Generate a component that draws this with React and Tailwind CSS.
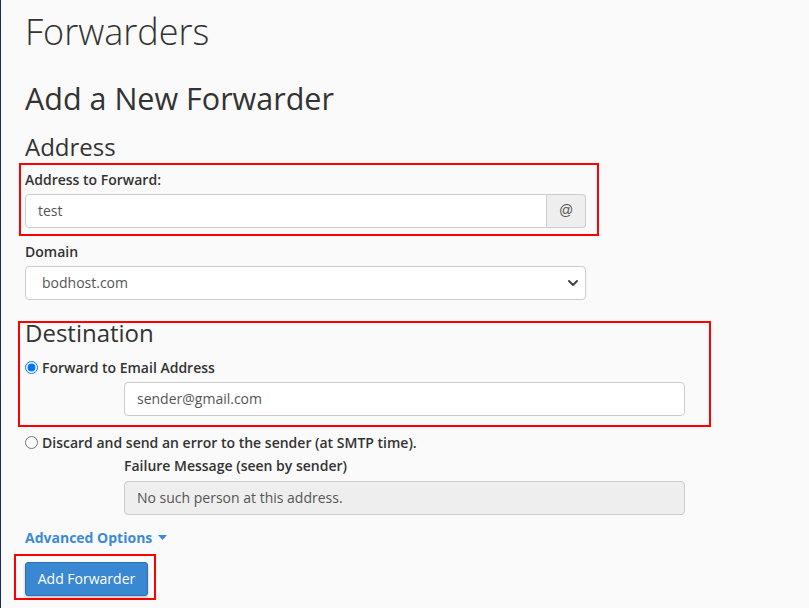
import React, { useState } from 'react';

const font = { fontFamily: '"Open Sans", "Liberation Sans", sans-serif' };

const App = () => {
  const [mode, setMode] = useState('fwd');

  return (
    <div style={font} className="min-h-screen bg-[#fafafa] border-l border-[#1f2b5e] pl-[24px] text-[#333]">
      <h1 className="pt-[12px] text-[36px] leading-[1.1] font-light">Forwarders</h1>

      <h2 className="mt-[30px] text-[30.5px] leading-[1.1] font-normal">Add a New Forwarder</h2>

      <h3 className="mt-[19px] text-[24px] leading-[1.1] font-normal">Address</h3>

      {/* Address to forward */}
      <div className="mt-[2px] ml-[-6px] w-[580px] border-2 border-[#f00] pl-[4px] pt-[5px] pb-[6px]">
        <label className="block text-[14px] leading-[20px] font-semibold">Address to Forward:</label>
        <div className="mt-[4px] flex w-[561px] h-[34px]">
          <input
            defaultValue="test"
            className="flex-1 h-full bg-white border border-[#ccc] rounded-l-[4px] px-[12px] text-[14px] text-[#555] outline-none"
          />
          <span className="w-[39px] h-full flex items-center justify-center bg-[#eee] border border-l-0 border-[#ccc] rounded-r-[4px] text-[14px] text-[#555]" style={{ fontFamily: '"Liberation Sans", sans-serif' }}>
            @
          </span>
        </div>
      </div>

      <label className="block mt-[6px] text-[14px] leading-[20px] font-semibold">Domain</label>
      <div className="mt-[4px] w-[561px] h-[34px] bg-white border border-[#ccc] rounded-[4px] flex items-center justify-between pl-[16px] pr-[6px] text-[14px] text-[#555]">
        <span>bodhost.com</span>
        <svg width="12" height="12" viewBox="0 0 12 12" className="text-[#444]">
          <path d="M2 4 L6 8 L10 4" fill="none" stroke="currentColor" strokeWidth="2" strokeLinecap="round" strokeLinejoin="round" />
        </svg>
      </div>

      {/* Destination */}
      <div className="mt-[21px] ml-[-7px] w-[693px] border-2 border-[#f00] pl-[5px] pt-0 pb-[9px]">
        <h3 className="text-[24px] leading-[20px] font-normal">Destination</h3>
        <label className="mt-[15px] flex items-center gap-[4px] text-[14px] leading-[20px] font-semibold">
          <input
            type="radio"
            name="dest"
            checked={mode === 'fwd'}
            onChange={() => setMode('fwd')}
            className="m-0 w-[13px] h-[13px]"
          />
          Forward to Email Address
        </label>
        <input
          defaultValue="sender@gmail.com"
          className="mt-[4px] ml-[99px] block w-[561px] h-[34px] bg-white border border-[#ccc] rounded-[4px] px-[12px] text-[14px] text-[#555] outline-none"
        />
      </div>

      <label className="mt-[6px] flex items-center gap-[4px] text-[14px] leading-[20px] font-semibold">
        <input
          type="radio"
          name="dest"
          checked={mode === 'fail'}
          onChange={() => setMode('fail')}
          className="m-0 w-[13px] h-[13px]"
        />
        Discard and send an error to the sender (at SMTP time).
      </label>
      <div className="ml-[99px]">
        <label className="block mt-[3px] text-[14px] leading-[20px] font-semibold">Failure Message (seen by sender)</label>
        <input
          disabled
          defaultValue="No such person at this address."
          className="mt-[5px] block w-[561px] h-[34px] bg-[#eee] border border-[#ccc] rounded-[4px] px-[12px] text-[14px] text-[#555] outline-none"
        />
      </div>

      <a className="mt-[13px] inline-flex items-center gap-[6px] text-[14px] leading-[20px] font-bold text-[#3c8ad6] cursor-pointer">
        Advanced Options
        <svg width="9" height="5" viewBox="0 0 9 5">
          <path d="M0 0 L9 0 L4.5 5 Z" fill="#3c8ad6" />
        </svg>
      </a>

      <div className="mt-[5px] ml-[-11px] w-[142px] border-2 border-[#f00] pl-[9px] pt-[6px] pb-[2px]">
        <button className="w-[123px] h-[34px] bg-[#3a88d2] border border-[#2d70b3] rounded-[3px] text-white text-[14px] shadow-[0_2px_3px_rgba(0,0,0,0.2)]">
          Add Forwarder
        </button>
      </div>
    </div>
  );
};

export default App;
